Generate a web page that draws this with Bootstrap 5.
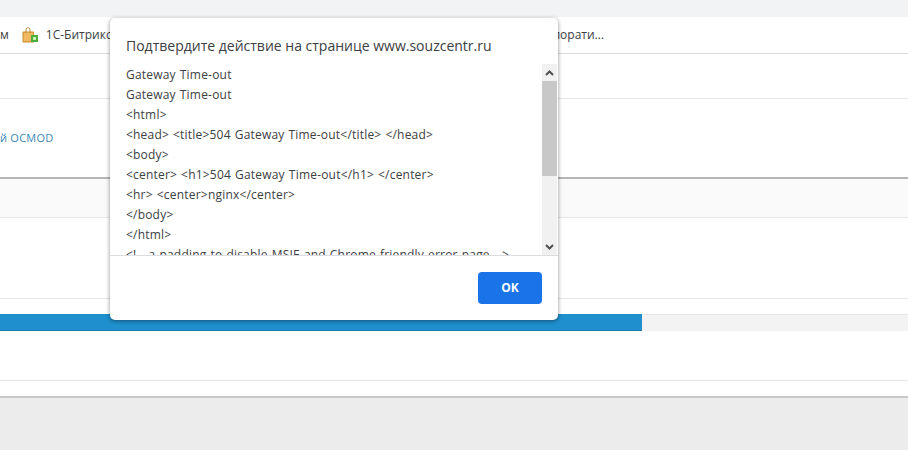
<!DOCTYPE html>
<html lang="ru"><head><meta charset="utf-8"><title>Подтверждение</title>
<link rel="stylesheet" href="https://cdn.jsdelivr.net/npm/bootstrap@5.3.0/dist/css/bootstrap.min.css">
<style>
html,body{height:450px;overflow:hidden}
body{background:#ececec;font-family:"Open Sans","Noto Sans",sans-serif;color:#333;position:relative}
.tabstrip{height:17px;background:#f1f3f4}
.bookbar{height:37px;background:#fff;border-bottom:1px solid #dadce0;font-size:12px;color:#3c4043}
.bookicon{margin:0 8px 0 13px}
.bookend{margin-left:441px}
.linkrow{height:45px;background:#fff;border-bottom:1px solid #e6e6e6}
.descrow{height:80px;background:#fff;border-bottom:2px solid #b5b5b5;font-size:11px;letter-spacing:.25px;color:#3d87b8;padding-top:31px;line-height:16px}
.headrow{height:39px;background:#fafafa;border-bottom:1px solid #e6e6e6}
.cellrow{height:81px;background:#fff;border-bottom:1px solid #e6e6e6}
.gaprow{height:15px;background:#fff}
.meter{height:17px;background:#f3f3f3;box-shadow:inset 0 1px 0 #e4e4e4}
.meterfill{width:642px;background:#1f8fce;border-bottom:1px solid #1a78ae}
.cellrow2{height:50px;background:#fff;border-bottom:1px solid #e6e6e6}
.endrow{height:17px;background:#fff;border-bottom:2px solid #c8c8c8}
.jsdialog{position:absolute;left:110px;top:18px;width:448px;height:302px;background:#fff;border-radius:5px;box-shadow:0 1px 4px rgba(0,0,0,.45)}
.jstitle{height:46px;padding:19px 0 0 16px;font-size:14px;line-height:18px;color:#3c4043;white-space:nowrap}
.jsbody{height:192px;border-bottom:1px solid #dadce0}
.jstext{padding:1px 0 0 17px;margin-left:-1px;font-size:12px;letter-spacing:.2px;word-spacing:.7px;line-height:20px;color:#3c4043;white-space:nowrap;overflow:hidden;width:432px}
.jsbar{width:15px;margin:0 1px 0 auto;background:#f1f1f1}
.jsarrow{height:17px}
.jsthumb{height:95px;background:#c8c8c8}
.jsfoot{padding:16px 16px 0 0}
.jsok{width:64px;height:32px;padding:0;border:0;border-radius:4px;background:#1a73e8;color:#fff;font-size:12px;font-weight:700;line-height:32px}
.jsok:hover{background:#1a73e8;color:#fff}
</style></head>
<body>
<div class="tabstrip"></div>
<div class="bookbar d-flex align-items-center overflow-hidden text-nowrap">
<span>м</span>
<svg class="bookicon" width="16" height="16" viewBox="0 0 16 16"><path d="M1 5h10.500l.5 10H1z" fill="#f0b860" stroke="#c98a2e"/><path d="M4 6V3c0-3 4-3 4 0v3" fill="none" stroke="#b98a4a"/><rect x="9" y="8" width="7" height="7" fill="#4caf3c"/><rect x="11" y="10" width="3" height="3" fill="#c8f0b0"/></svg>
<span>1С-Битрикс</span>
<span class="bookend">порати...</span>
</div>
<div class="linkrow"></div>
<div class="descrow text-nowrap">й ОСМОD</div>
<div class="headrow"></div>
<div class="cellrow"></div>
<div class="gaprow"></div>
<div class="meter d-flex"><div class="meterfill"></div></div>
<div class="cellrow2"></div>
<div class="endrow"></div>

<div class="jsdialog" role="dialog">
<div class="jstitle">Подтвердите действие на странице www.souzcentr.ru</div>
<div class="jsbody d-flex overflow-hidden">
<div class="jstext">
<div>Gateway Time-out</div>
<div>Gateway Time-out</div>
<div>&lt;html&gt;</div>
<div>&lt;head&gt; &lt;title&gt;504 Gateway Time-out&lt;/title&gt; &lt;/head&gt;</div>
<div>&lt;body&gt;</div>
<div>&lt;center&gt; &lt;h1&gt;504 Gateway Time-out&lt;/h1&gt; &lt;/center&gt;</div>
<div>&lt;hr&gt; &lt;center&gt;nginx&lt;/center&gt;</div>
<div>&lt;/body&gt;</div>
<div>&lt;/html&gt;</div>
<div>&lt;!-- a padding to disable MSIE and Chrome friendly error page --&gt;</div>
</div>
<div class="jsbar d-flex flex-column">
<div class="jsarrow d-flex align-items-center justify-content-center"><svg width="9" height="6" viewBox="0 0 9 6"><path d="M1 5l3.500-3.500L8 5" fill="none" stroke="#505050" stroke-width="2"/></svg></div>
<div class="jsthumb"></div>
<div class="jsarrow d-flex align-items-center justify-content-center mt-auto"><svg width="9" height="6" viewBox="0 0 9 6"><path d="M1 1l3.500 3.500L8 1" fill="none" stroke="#505050" stroke-width="2"/></svg></div>
</div>
</div>
<div class="jsfoot d-flex justify-content-end"><button class="btn jsok" type="button">OK</button></div>
</div>
</body></html>
